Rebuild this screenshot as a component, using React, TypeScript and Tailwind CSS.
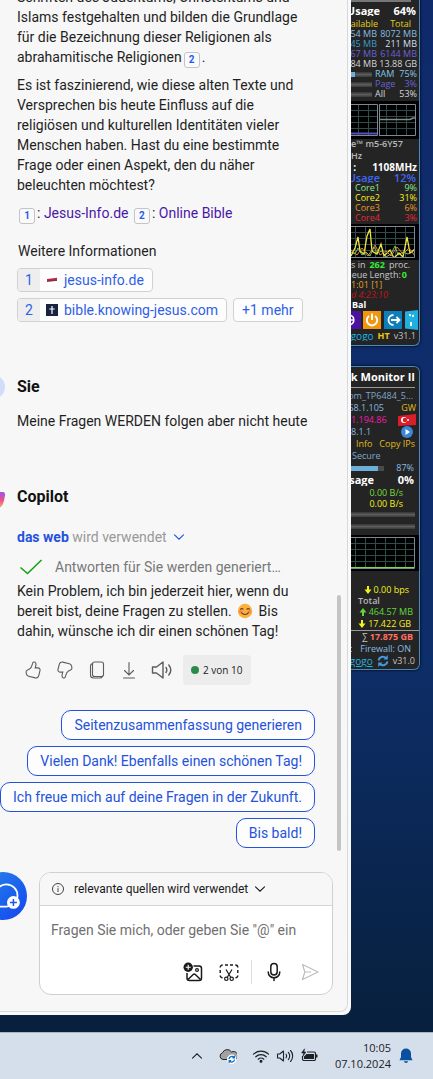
import { useState } from 'react'
import type { ReactNode } from 'react'
import clsx from 'clsx'

const suggestions = [
  'Seitenzusammenfassung generieren',
  'Vielen Dank! Ebenfalls einen schönen Tag!',
  'Ich freue mich auf deine Fragen in der Zukunft.',
  'Bis bald!',
]

const memory = [
  { free: '054 MB', total: '8072 MB', color: 'text-[#86bbe2]' },
  { free: '45 MB', total: '211 MB', color: 'text-[#3d9ace]', totalColor: 'text-[#d3dff5]' },
  { free: '067 MB', total: '6144 MB', color: 'text-[#6a61d6]' },
  { free: '884 MB', total: '13.88 GB', color: 'text-[#d6d6d6]' },
]

const usage = [
  { name: 'RAM', value: '75%', color: 'text-[#86c5e6]', fill: 'w-1/6' },
  { name: 'Page', value: '3%', color: 'text-[#6a61d6]', fill: 'w-0' },
  { name: 'All', value: '53%', color: 'text-[#d6d6d6]', fill: 'w-0' },
]

const cores = [
  { name: 'Core1', value: '9%', color: 'text-[#8be78b]' },
  { name: 'Core2', value: '31%', color: 'text-[#f4f01c]' },
  { name: 'Core3', value: '6%', color: 'text-[#e8962e]' },
  { name: 'Core4', value: '3%', color: 'text-[#e02b33]' },
]

function Cite({ n }: { n: number }) {
  return (
    <a href={`#quelle-${n}`} className="mx-0.5 -mb-1 inline-flex size-4 items-center justify-center rounded-[3px] border border-[#c4c4c4] bg-[#fafafa] align-[-1px] text-[10px] leading-none font-bold text-[#2a5bf0]">
      {n}
    </a>
  )
}

function SourceChip({ n, label, icon }: { n: number; label: string; icon: ReactNode }) {
  return (
    <a id={`quelle-${n}`} href="#" className="flex h-6 items-center overflow-hidden rounded border border-[#d1d1d1] bg-[#fdfdfd] pr-2 text-[#2f5fe8]">
      <span className="flex h-full w-[22px] items-center justify-center bg-[#eeeeee]">{n}</span>
      <span className="mx-1.5 flex size-3 shrink-0">{icon}</span>
      {label}
    </a>
  )
}

function ThumbIcon({ className }: { className?: string }) {
  return (
    <svg className={clsx('h-[18px] w-4', className)} viewBox="0 0 16 18" fill="none" stroke="currentColor" strokeWidth="1.1">
      <path d="M8.5 1.1C9.4.7 10.9 1.2 11 3c.1 1.3-.4 2.8-.8 3.9H13c1.6 0 2.3 1.3 2 2.7l-1.2 4.8c-.4 1.8-1.8 2.9-3.6 2.5l-6.6-1.7C2.4 14.9 1.6 14 1.4 12.9l-.3-1.5C.9 10.3 1.5 9.3 2.5 8.9l2-.9c2.1-1 2.5-3.4 3.1-5.6.1-.6.4-1.1.9-1.3Z" />
    </svg>
  )
}

function Chevron({ className }: { className?: string }) {
  return (
    <svg className={className} viewBox="0 0 12 12" fill="none" stroke="currentColor" strokeWidth="1.1" strokeLinecap="round">
      <path d="m1.5 3.8 4.5 4.4 4.5-4.4" />
    </svg>
  )
}

function SmileIcon() {
  return (
    <svg className="mx-0.5 inline size-4 align-[-3px]" viewBox="0 0 16 16" fill="none">
      <circle cx="8" cy="8" r="7.2" fill="#fbb13b" />
      <circle cx="3.6" cy="8.6" r="1.9" fill="#f58a4c" />
      <circle cx="12.4" cy="8.6" r="1.9" fill="#f58a4c" />
      <path d="M3.6 6.3c.5-1.1 1.9-1.1 2.4 0M10 6.3c.5-1.1 1.9-1.1 2.4 0M4.6 9.8c1.6 2.2 5.2 2.2 6.8 0" stroke="#5c3a1e" strokeWidth="1.1" strokeLinecap="round" />
    </svg>
  )
}

function Answer() {
  return (
    <div className="pr-8 pl-[17px]">
      <p className="-mt-[13px]">
        Schriften des Judentums, Christentums und Islams festgehalten und bilden die Grundlage für die Bezeichnung dieser Religionen als abrahamitische Religionen<Cite n={2} />.
      </p>
      <p className="mt-2">
        Es ist faszinierend, wie diese alten Texte und Versprechen bis heute Einfluss auf die religiösen und kulturellen Identitäten vieler Menschen haben. Hast du eine bestimmte Frage oder einen Aspekt, den du näher beleuchten möchtest?
      </p>
      <p className="mt-2">
        <Cite n={1} />: <a href="#quelle-1" className="text-[#4a17a8]">Jesus-Info.de</a>{' '}
        <Cite n={2} />: <a href="#quelle-2" className="text-[#4a17a8]">Online Bible</a>
      </p>
      <div className="mt-[18px] pl-px">Weitere Informationen</div>
      <div className="mt-[7px] flex flex-wrap gap-1.5">
        <SourceChip n={1} label="jesus-info.de" icon={
          <svg viewBox="0 0 12 12" className="size-3 bg-white"><path d="M1 5 11 3.8v2.8L1 7.6Z" fill="#b8294a" /><path d="M1 7.4 11 6.4" stroke="#5b2436" strokeWidth=".8" /></svg>
        } />
        <span className="w-full" />
      </div>
      <div className="flex flex-wrap gap-1.5">
        <SourceChip n={2} label="bible.knowing-jesus.com" icon={
          <svg viewBox="0 0 12 12" className="size-3"><path d="M0 0h12v12H0Z" fill="#17233f" /><path d="M6 2v8M3.3 5h5.4" stroke="#fff" strokeWidth="1.2" /></svg>
        } />
        <button className="h-6 rounded border border-[#d1d1d1] bg-[#fdfdfd] px-2 text-[#2f5fe8]">+1 mehr</button>
      </div>
    </div>
  )
}

function UserMessage() {
  return (
    <div className="relative mt-[53px] pr-8 pl-[17px]">
      <span className="absolute top-0 -left-[19px] size-6 rounded-full bg-[#d0dcfa]" />
      <h3 className="text-base leading-6 font-bold text-[#111111]">Sie</h3>
      <p className="mt-3">Meine Fragen WERDEN folgen aber nicht heute</p>
    </div>
  )
}

function CopilotMessage() {
  return (
    <div className="relative mt-[54px] pr-8 pl-[17px]">
      <svg className="absolute top-[7px] left-0 h-4 w-[5px]" viewBox="0 0 5 16">
        <defs>
          <linearGradient id="copilot" x1="0" y1="0" x2="0" y2="1">
            <stop offset="0" stopColor="#9a55ee" />
            <stop offset=".5" stopColor="#ea4f8f" />
            <stop offset="1" stopColor="#f9a26b" />
          </linearGradient>
        </defs>
        <path d="M0 0h3c2 0 2.3 2 1.8 4.5C4 9.5 3 14 0 15.5Z" fill="url(#copilot)" />
      </svg>
      <h3 className="text-base leading-6 font-bold text-[#111111]">Copilot</h3>
      <button className="mt-[18px] flex items-center text-[#999999]">
        <span><b className="text-[#2452dc]">das web</b> wird verwendet</span>
        <Chevron className="ml-1.5 size-3 text-[#2452dc]" />
      </button>
      <div className="mt-2.5 flex items-center text-[#777777]">
        <svg className="mr-2.5 ml-0.5 h-4 w-[26px]" viewBox="0 0 26 16" fill="none" stroke="#13a10e" strokeWidth="1.5"><path d="m1.5 8.5 7 6L22.500 1" /></svg>
        Antworten für Sie werden generiert…
      </div>
      <p className="mt-1">
        Kein Problem, ich bin jederzeit hier, wenn du bereit bist, deine Fragen zu stellen. <SmileIcon /> Bis dahin, wünsche ich dir einen schönen Tag!
      </p>
      <div className="mt-3.5 flex h-[30px] items-center gap-4 pl-2 text-[#5c5c5c]">
        <button aria-label="Gefällt mir"><ThumbIcon /></button>
        <button aria-label="Gefällt mir nicht"><ThumbIcon className="rotate-180" /></button>
        <button aria-label="Kopieren">
          <svg className="h-[18px] w-4" viewBox="0 0 16 18" fill="none" stroke="currentColor" strokeWidth="1.1">
            <rect x="3.5" y="1" width="11" height="14.5" rx="2" />
            <path d="M3.5 2.6C2.2 2.9 1.5 3.6 1.5 5v9c0 1.8 1.2 3 3 3h6.5c1.200 0 1.900-.5 2.200-1.500" />
          </svg>
        </button>
        <button aria-label="Exportieren">
          <svg className="h-[18px] w-4" viewBox="0 0 16 18" fill="none" stroke="currentColor" strokeWidth="1.1" strokeLinecap="round"><path d="M8 1.5V14M3.5 9.5 8 14l4.500-4.500M2.500 17h11" /></svg>
        </button>
        <button aria-label="Vorlesen" className="-ml-0.5">
          <svg className="h-5 w-[22px]" viewBox="0 0 22 20" fill="none" stroke="currentColor" strokeWidth="1.4" strokeLinejoin="round" strokeLinecap="round">
            <path d="M1.500 7v6h4l6.500 5V2L5.500 7ZM15 7.500c1 1.500 1 3.500 0 5M17.800 5c2.400 3 2.400 7 0 10" />
          </svg>
        </button>
        <span className="-ml-1.5 flex h-full items-center gap-1 rounded bg-[#ececec] px-2 font-['Open_Sans',sans-serif] text-[10px] text-[#222222]">
          <i className="size-2 rounded-full bg-[#2b8a4b]" />
          2 von 10
        </span>
      </div>
    </div>
  )
}

function Composer() {
  const [text, setText] = useState('')
  return (
    <div className="relative mt-auto pr-3.5 pb-4 pl-[39px]">
      <button aria-label="Neues Thema" className="absolute top-0 -left-[21px] flex size-12 items-center justify-center rounded-full bg-linear-to-br from-[#2f86e8] to-[#1b3df0]">
        <svg className="ml-2 size-7" viewBox="0 0 24 24" fill="none">
          <path d="M2 19.500V11.500a9.500 9.500 0 1 1 9.500 9.500H3.500Z" stroke="#fff" strokeWidth="1.5" />
          <circle cx="17.500" cy="17.500" r="5.500" fill="#fff" />
          <path d="M17.500 14.500v6M14.500 17.500h6" stroke="#2154ee" strokeWidth="1.3" />
        </svg>
      </button>
      <div className="overflow-hidden rounded-xl border border-[#cfcfcf] bg-white">
        <button className="flex h-[33px] w-full items-center border-b border-[#d6d6d6] bg-[#f7f7f7] px-3 text-xs text-[#1a1a1a]">
          <svg className="mr-2.5 size-3" viewBox="0 0 12 12" fill="none" stroke="#444444"><circle cx="6" cy="6" r="5.500" /><path d="M6 5.200V9M6 3v1.200" /></svg>
          relevante quellen wird verwendet
          <Chevron className="ml-1.5 size-3" />
        </button>
        <textarea
          aria-label="Nachricht"
          value={text}
          onChange={(e) => setText(e.target.value)}
          placeholder={'Fragen Sie mich, oder geben Sie "@" ein'}
          className="block h-11 w-full resize-none overflow-hidden px-[11px] pt-3.5 outline-none placeholder:text-[#707070]"
        />
        <div className="flex h-11 items-center justify-end pr-3 text-[#1a1a1a]">
          <button aria-label="Bild hinzufügen">
            <svg className="size-5" viewBox="0 0 20 20" fill="none" stroke="currentColor" strokeWidth="1.5">
              <path d="M10.500 4H16a2.500 2.500 0 0 1 2.500 2.500V16a2.500 2.500 0 0 1-2.500 2.500H6.500A2.500 2.500 0 0 1 4 16v-5" />
              <path d="m5 17.500 5.200-5a1.500 1.500 0 0 1 2.100 0l5.200 5" />
              <circle cx="14" cy="8" r="1.400" strokeWidth="1.2" />
              <circle cx="5.200" cy="5.200" r="4.700" fill="currentColor" stroke="none" />
              <path d="M5.200 2.700v5M2.700 5.200h5" stroke="#fff" strokeWidth="1.1" />
            </svg>
          </button>
          <button aria-label="Screenshot hinzufügen" className="ml-4">
            <svg className="size-5" viewBox="0 0 20 20" fill="none" stroke="currentColor" strokeWidth="1.4">
              <path d="M1.200 5.500A2.500 2.500 0 0 1 3.700 3M6 3h3M11 3h3M16.300 3a2.500 2.500 0 0 1 2.500 2.500M18.800 8v3M18.800 13.500a2.500 2.500 0 0 1-2.300 2.300M3.500 15.800a2.500 2.500 0 0 1-2.300-2.300M1.200 8v3" />
              <path d="m7 7.500 4.700 7.800M13 7.500l-4.700 7.800" strokeWidth="1.2" />
              <circle cx="7.300" cy="16.800" r="1.700" strokeWidth="1.2" />
              <circle cx="12.700" cy="16.800" r="1.700" strokeWidth="1.2" />
            </svg>
          </button>
          <span className="mx-3 h-6 w-px bg-[#dddddd]" />
          <button aria-label="Mikrofon verwenden">
            <svg className="size-5" viewBox="0 0 20 20" fill="none" stroke="currentColor" strokeWidth="1.5" strokeLinecap="round">
              <rect x="6.800" y="1.500" width="6.400" height="11.500" rx="3.200" />
              <path d="M4.200 10a5.800 5.800 0 0 0 11.600 0M10 16v2.500" />
            </svg>
          </button>
          <button aria-label="Absenden" className="ml-4">
            <svg className="size-5" viewBox="0 0 20 20" fill="none" stroke="#bdbdbd" strokeWidth="1.2" strokeLinejoin="round"><path d="m2.500 2.500 15.500 7.500-15.500 7.500L4.800 10ZM4.800 10H11" /></svg>
          </button>
        </div>
      </div>
    </div>
  )
}

function Row({ left, children, className }: { left?: ReactNode; children?: ReactNode; className?: string }) {
  return (
    <div className={clsx('flex items-center whitespace-nowrap', className)}>
      <div className="flex min-w-0 flex-1 justify-end overflow-hidden">{left}</div>
      {children}
    </div>
  )
}

function Meter({ fill }: { fill: string }) {
  return (
    <span className="h-[5px] flex-1 bg-linear-to-b from-[#333333] via-[#5c5c5c] to-[#3a3a3a]">
      <i className={clsx('block h-full bg-[#6cb0da]', fill)} />
    </span>
  )
}

function Arrow({ up }: { up?: boolean }) {
  return (
    <svg className={clsx('size-2 shrink-0', up && 'rotate-180')} viewBox="0 0 8 8" fill="currentColor"><path d="M3 0h2v3.500h2.500L4 8 .5 3.500H3Z" /></svg>
  )
}

function Grid({ children, className }: { children?: ReactNode; className?: string }) {
  return (
    <svg className={className} viewBox="0 0 64 32" preserveAspectRatio="xMaxYMid slice" fill="none">
      <path d="M4.500 0v32M14.500 0v32M24.500 0v32M34.500 0v32M44.500 0v32M54.500 0v32M0 6.500h64M0 12.500h64M0 18.500h64M0 24.500h64" stroke="#2f4d48" />
      {children}
      <path d="M0 .5h63.500v31H0" stroke="#7d8894" />
    </svg>
  )
}

function SystemGadget() {
  return (
    <section className="overflow-hidden rounded-br-md border-r border-b border-[#4589bd] bg-[#242424] pb-[3px] text-[9px] leading-[10px] shadow-[0_0_3px_#000000]">
      <div className="mr-2 h-0.5 bg-[#777777]" />
      <Row className="h-[17px] pr-[3px] text-[11px] font-bold text-white" left="Usage"><span className="w-9 text-right">64%</span></Row>
      <Row className="pr-2 text-[#e6cf1e]" left="Available"><span className="ml-3">Total</span></Row>
      {memory.map((m) => (
        <Row key={m.total} className={clsx('pr-0.5', m.color)} left={m.free}>
          <span className={clsx('w-10 text-right', m.totalColor)}>{m.total}</span>
        </Row>
      ))}
      {usage.map((u) => (
        <div key={u.name} className={clsx('flex items-center pr-0.5', u.color)}>
          <Meter fill={u.fill} />
          <span className="ml-[3px] w-[21px]">{u.name}</span>
          <span className="w-[21px] text-right">{u.value}</span>
        </div>
      ))}
      <div className="mt-0.5 flex h-[38px] items-center justify-between bg-black pr-[3px]">
        <Grid className="h-8 w-[27px]"><path d="M0 29.500h64" stroke="#554ec0" strokeWidth="2" /></Grid>
        <Grid className="h-8 w-[37px] border-l border-[#7d8894]"><path d="M0 15.500h58l3-1.500h3" stroke="#8a8a8a" strokeWidth="1.5" /></Grid>
      </div>
      <div className="overflow-hidden font-semibold whitespace-nowrap text-[#b9b9b9]">e™ m5-6Y57</div>
      <div className="pt-0.5 font-semibold text-[#b9b9b9]">Hz</div>
      <Row className="h-3 pr-0.5 text-[10px] font-bold text-white" left=":"><span className="ml-4">1108MHz</span></Row>
      <Row className="pr-[3px] text-[11px] font-semibold text-[#4066f5]" left="Usage"><span className="w-9 text-right">12%</span></Row>
      {cores.map((c) => (
        <div key={c.name} className={clsx('flex justify-between pr-0.5 pl-1', c.color)}>
          <span>{c.name}</span>
          <span>{c.value}</span>
        </div>
      ))}
      <div className="mt-px bg-black pt-0.5 pb-0.5">
        <Grid className="h-8 w-16">
          <path d="m0 26 4 2 3-6 4 7 4-3 4 4 4-9 3 6 5-2 4 6 5-3 4-8 3 9 5-3 5 2 7-4" stroke="#6fc46f" />
          <path d="m0 30 4-8 3-11 2 14 4 3 3-18 3-7 2 22 5 3 4-10 3 12 6-6 4 8 5-5 4 4 4-20 3 16 5-4" stroke="#f0e63c" strokeWidth="1.3" />
          <path d="m0 24 6 5 5-7 6 8 7-11 5 10 6-4 5 5 6-9 6 7 6-6 6 8" stroke="#e28a35" />
        </Grid>
      </div>
      <div className="flex gap-1 overflow-hidden whitespace-nowrap text-[#c8c8c8]"><span>s in</span><b className="text-[#38e838]">262</b><span>proc.</span></div>
      <Row className="pr-3 text-[#c8c8c8]" left={<>Queue Length: <b className="ml-px text-[#38e838]">0</b></>} />
      <div className="text-[#e0a32a]">1:01 [1]</div>
      <div className="text-[#c0141a] italic">d 4:23:10</div>
      <div className="pl-px font-bold text-white">Bal</div>
      <div className="flex items-center gap-px">
        <button aria-label="Ruhezustand" className="h-[18px] w-2.5 bg-[#4c12a0]">
          <svg viewBox="0 0 10 18" className="h-full w-full" fill="none" stroke="#fff" strokeWidth="1.5"><path d="M0 4.500a5 5 0 0 1 0 9" /><path d="M0 9h2" /></svg>
        </button>
        <button aria-label="Herunterfahren" className="ml-px size-[18px] bg-[#f0960f]">
          <svg viewBox="0 0 18 18" className="h-full w-full" fill="none" stroke="#fff" strokeWidth="1.9"><path d="M6 5a5.200 5.200 0 1 0 6 0M9 2.500V9" /></svg>
        </button>
        <button aria-label="Abmelden" className="ml-0.5 size-[18px] bg-[#0d7fbd]">
          <svg viewBox="0 0 18 18" className="h-full w-full" fill="none" stroke="#fff" strokeWidth="1.8"><path d="M9.500 4a5 5 0 1 0 0 10M7 9h8.500M12.500 6l3 3-3 3" /></svg>
        </button>
        <svg viewBox="0 0 14 20" className="ml-px h-5 w-3.5"><path d="M1 1.500 14 0v20L1 18.500Z" fill="#1fb0e0" /><path d="m5 4 2 .3v2L5 6ZM8 5l2-.3v2L8 7ZM6 12h2v4H6Z" fill="#fff" /></svg>
      </div>
      <Row className="h-3 pr-[3px]" left={<a href="#" className="text-[10px] text-[#20b0e4] underline">gogo</a>}>
        <b className="mx-1 text-[#e8c81b]">HT</b><span className="text-[#c2c2c2]">v31.1</span>
      </Row>
    </section>
  )
}

function NetworkGadget() {
  return (
    <section className="mt-5 overflow-hidden rounded-r-md border-y border-r border-[#4589bd] bg-[#242424] pb-0.5 text-[9px] leading-3 shadow-[0_0_3px_#000000]">
      <Row className="h-5 pr-1 text-[11px] font-bold text-white" left="k Monitor II" />
      <div className="mr-1 mb-0.5 h-px bg-[#999999]" />
      <Row className="pr-1.5 text-[#7ea6c8]" left="com_TP6484_5..." />
      <Row className="pr-[3px] text-[#86bbe2]" left="68.1.105"><span className="w-8 text-right text-[#e0bc1c]">GW</span></Row>
      <div className="flex items-center justify-between overflow-hidden pr-[3px] text-[#f01ca8]">
        1.194.86
        <svg className="h-3 w-[18px] shrink-0" viewBox="0 0 18 12"><path d="M0 2 18 0v11L0 12Z" fill="#d81e2a" /><circle cx="6" cy="6" r="3" fill="#fff" /><circle cx="7" cy="6" r="2.300" fill="#d81e2a" /><circle cx="10" cy="6" r="1" fill="#fff" /></svg>
      </div>
      <div className="flex items-center justify-between pr-1.5 text-[#86bbe2]">
        8.1.1
        <svg className="size-3" viewBox="0 0 12 12"><circle cx="6" cy="6" r="6" fill="#3c86d6" /><path d="M4.500 3v6L9 6Z" fill="#fff" /></svg>
      </div>
      <div className="flex justify-between pr-1 pl-[5px] whitespace-nowrap text-[#e0bc1c]"><button>Info</button><button>Copy IPs</button></div>
      <div className="pl-px text-[#7fa9cc]">Secure</div>
      <div className="flex items-center pr-[5px] text-[#86bbe2]"><Meter fill="w-full" /><span className="h-[5px] w-1.5 bg-[#4a4a4a]" /><span className="w-[30px] text-right">87%</span></div>
      <Row className="h-3 pr-[5px] text-[11px] font-bold text-white" left="sage"><span className="w-10 text-right">0%</span></Row>
      <div className="pt-px pr-4 text-right text-[#7ddc3c]">0.00 B/s</div>
      <div className="pr-4 text-right leading-[10px] text-[#f4f01c]">0.00 B/s</div>
      <div className="flex flex-col gap-[7px] pt-[3px] pr-1"><span className="flex"><Meter fill="w-0" /></span><span className="flex"><Meter fill="w-0" /></span></div>
      <div className="mt-1.5 bg-black py-0.5"><Grid className="h-8 w-16"><path d="M0 30.500h63" stroke="#7ddc3c" /></Grid></div>
      <div className="flex items-center justify-end gap-0.5 pt-[13px] pr-2.5 whitespace-nowrap text-[#f4f01c]"><Arrow />0.00 bps</div>
      <div className="pl-[7px] leading-[10px] font-semibold text-[#b9b9b9]">Total</div>
      <div className="flex items-center justify-end gap-0.5 pr-1.5 whitespace-nowrap text-[#62d63c]"><Arrow up />464.57 MB</div>
      <div className="flex items-center justify-end gap-0.5 pr-2 whitespace-nowrap text-[#f4f01c]"><Arrow />17.422 GB</div>
      <div className="flex items-center justify-end gap-0.5 border-t border-[#999999] pr-1.5 font-bold whitespace-nowrap text-[#ff7060]"><span className="font-normal text-[#c2c2c2]">∑</span>17.875 GB</div>
      <Row className="pr-2 text-[#86bbe2]" left="c"><span className="ml-2">Firewall: ON</span></Row>
      <Row className="pr-1" left={<a href="#" className="text-[10px] text-[#20b0e4] underline">gogo</a>}>
        <svg className="mx-1 size-3" viewBox="0 0 12 12" fill="none" stroke="#3f9be0" strokeWidth="2"><path d="M1.500 5.500A4.500 4.500 0 0 1 9 3M10.500 6.500A4.500 4.500 0 0 1 3 9" /><path d="M10.800 0v4.500H6.500ZM1.200 12V7.500h4.300Z" fill="#3f9be0" stroke="none" /></svg>
        <span className="text-[#c2c2c2]">v31.0</span>
      </Row>
    </section>
  )
}

function Taskbar() {
  return (
    <footer className="flex h-[47px] items-center justify-end border-t border-[#a9b6c4] bg-[#d5dfeb] pr-5 font-['Open_Sans',sans-serif] text-[#1c2126]">
      <button aria-label="Ausgeblendete Symbole"><Chevron className="size-3 rotate-180" /></button>
      <svg className="ml-4 h-4 w-[18px]" viewBox="0 0 18 16">
        <path d="M4 11.500A3.500 3.500 0 0 1 3.600 4.700 5 5 0 0 1 12.500 4a4 4 0 0 1 4 7.500Z" fill="#a2a2a2" stroke="#222222" />
        <rect x="8" y="6.500" width="9.500" height="9.500" rx="4.700" fill="#fff" />
        <path d="M10 11a2.800 2.800 0 0 1 5-1.500M15.500 11.500a2.800 2.800 0 0 1-5 1.500M15.400 7.800v2h-2M10.200 14.700v-2h2" fill="none" stroke="#1273cf" strokeWidth="1.3" />
      </svg>
      <svg className="ml-[15px] h-4 w-[18px]" viewBox="0 0 18 16" fill="none" stroke="currentColor" strokeWidth="1.2" strokeLinecap="round">
        <path d="M1.500 6.200a10.600 10.600 0 0 1 15 0M3.800 8.800a7.400 7.400 0 0 1 10.400 0M6.200 11.200a4 4 0 0 1 5.600 0" />
        <circle cx="9" cy="13.300" r=".9" fill="currentColor" />
      </svg>
      <svg className="ml-1.5 h-4 w-[18px]" viewBox="0 0 18 16" fill="none" stroke="currentColor" strokeWidth="1.1" strokeLinejoin="round" strokeLinecap="round">
        <path d="M1.500 6v4h2.200L7.500 13V3L3.700 6ZM10 6.200c.8 1 .8 2.600 0 3.600M12.300 4.300c1.900 2 1.900 5.400 0 7.400M14.500 2.500c2.900 3 2.900 8 0 11" />
      </svg>
      <svg className="ml-1.5 h-4 w-[18px]" viewBox="0 0 18 16" fill="none" stroke="currentColor" strokeWidth="1.2">
        <path d="M7 4h7a1.500 1.500 0 0 1 1.500 1.500v5.500A1.500 1.500 0 0 1 14 12.500H4A1.500 1.500 0 0 1 2.500 11V8" />
        <path d="M6.500 6H14v5H4V8.500ZM16 6.500h1.500v3H16Z" fill="currentColor" stroke="none" />
        <path d="M4.500.8 1.500 5h2.200L2.800 8.500 6 4H4Z" fill="currentColor" strokeWidth=".5" />
      </svg>
      <time className="ml-[17px] text-right text-[11px] leading-4">10:05<br />07.10.2024</time>
      <button aria-label="Benachrichtigungen" className="ml-2">
        <svg className="h-4 w-3.5" viewBox="0 0 14 16" fill="#0b4fa0"><path d="M7 .5a5 5 0 0 0-5 5V9L.5 12.300h13L12 9V5.500a5 5 0 0 0-5-5ZM4.800 13.300a2.300 2.300 0 0 0 4.400 0Z" /></svg>
      </button>
    </footer>
  )
}

export default function App() {
  return (
    <div className="flex min-h-screen flex-col overflow-hidden bg-linear-to-b from-[#0f2a6b] via-[#0e2e6a] via-60% to-[#071e38]">
      <div className="flex flex-1">
        <main className="relative z-10 flex min-w-0 flex-1 flex-col rounded-br-lg bg-[#f9f9f9] pr-[3px] pb-[3px] font-[Roboto,sans-serif] text-sm leading-5 text-[#1f1f1f]">
          <div className="relative flex flex-1 flex-col overflow-hidden rounded-br-lg border-r border-b border-[#d8d8d8] bg-[#f7f7f7]">
            <Answer />
            <UserMessage />
            <CopilotMessage />
            <div className="mt-[25px] flex flex-col items-end gap-1.5 pr-8">
              {suggestions.map((s) => (
                <button key={s} className="h-[30px] rounded-[10px] border border-[#2452dc] bg-[#fdfdfd] px-3 whitespace-nowrap text-[#2452dc]">{s}</button>
              ))}
            </div>
            <div className="h-6" />
            <Composer />
            <div className="absolute right-1.5 bottom-40 h-64 w-1 rounded-full bg-[#c4c4c4]" />
          </div>
        </main>
        <aside className="mr-[13px] w-[69px] shrink-0 font-['Open_Sans',sans-serif]">
          <SystemGadget />
          <NetworkGadget />
        </aside>
      </div>
      <div className="h-[17px]" />
      <Taskbar />
    </div>
  )
}
